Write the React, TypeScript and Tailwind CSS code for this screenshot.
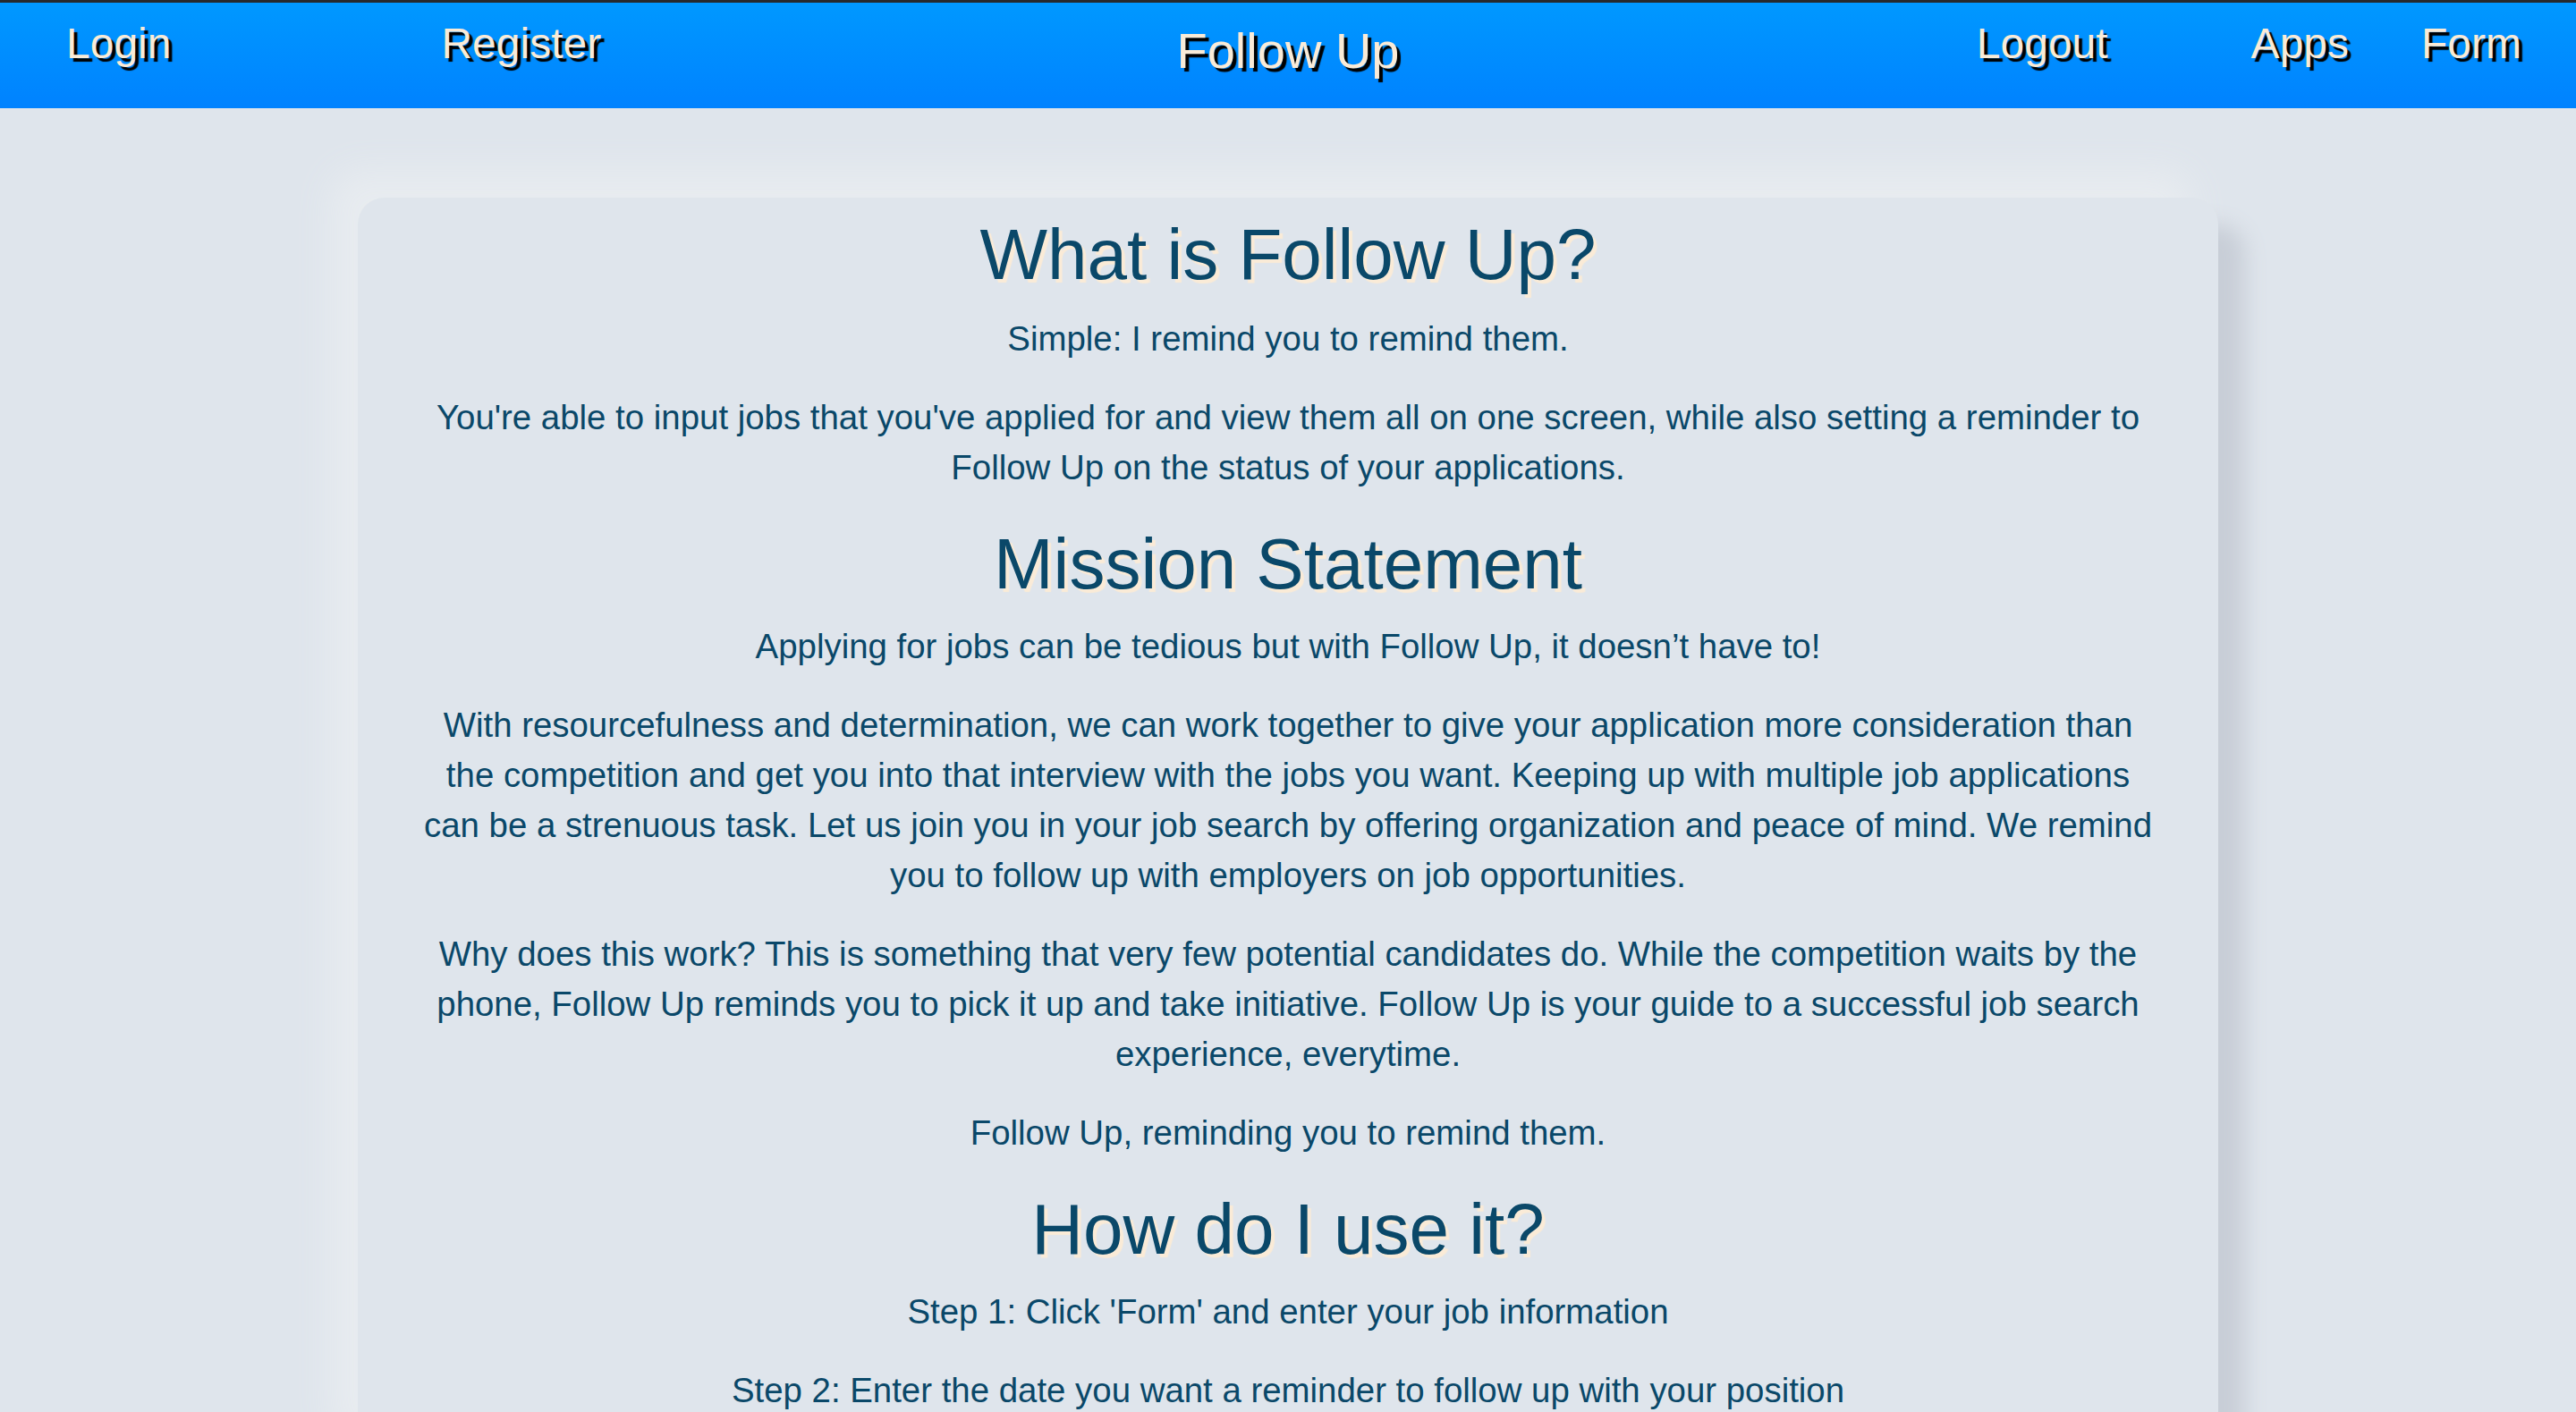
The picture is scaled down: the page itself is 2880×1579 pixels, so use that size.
import React from "react";

const navText =
  "text-[48px] text-[#faebd7] [text-shadow:4px_4px_1px_#000] leading-none";

export default function App() {
  return (
    <div className="min-h-screen bg-[#dfe5ec] font-['Liberation_Sans',Arial,sans-serif]">
      <nav className="h-[121px] border-t-[3px] border-[#26292c] bg-gradient-to-b from-[#0098ff] to-[#0082ff] grid grid-cols-3 items-start">
        <div className="flex pl-[74px] pt-[22px]">
          <span className={navText}>Login</span>
          <span className={navText + " ml-[302px]"}>Register</span>
        </div>
        <div className="flex justify-center pt-[26px]">
          <span className="text-[56px] text-[#faebd7] [text-shadow:4px_4px_1px_#000] leading-none">
            Follow Up
          </span>
        </div>
        <div className="flex justify-end pr-[61px] pt-[22px]">
          <span className={navText}>Logout</span>
          <span className={navText + " ml-[160px]"}>Apps</span>
          <span className={navText + " ml-[81px]"}>Form</span>
        </div>
      </nav>

      <div className="pt-[100px] pb-[80px] flex justify-center">
        <div className="w-[2080px] rounded-[30px] bg-[#dfe5ec] px-[70px] pt-[32px] pb-[60px] text-center text-[#0a4869] shadow-[30px_30px_24px_#c8ced7,-30px_-30px_40px_#e8ecf0]">
          <h1 className="text-[80px] leading-[64px] [text-shadow:4px_4px_1px_#faebd7]">
            What is Follow Up?
          </h1>
          <p className="mt-[34px] text-[38.4px] leading-[56px]">
            Simple: I remind you to remind them.
          </p>
          <p className="mt-[32px] text-[38.4px] leading-[56px]">
            You're able to input jobs that you've applied for and view them all on one screen, while also setting a reminder to Follow Up on the status of your applications.
          </p>
          <h1 className="mt-[48px] text-[80px] leading-[64px] [text-shadow:4px_4px_1px_#faebd7]">
            Mission Statement
          </h1>
          <p className="mt-[32px] text-[38.4px] leading-[56px]">
            Applying for jobs can be tedious but with Follow Up, it doesn’t have to!
          </p>
          <p className="mt-[32px] text-[38.4px] leading-[56px]">
            With resourcefulness and determination, we can work together to give your application more consideration than the competition and get you into that interview with the jobs you want. Keeping up with multiple job applications can be a strenuous task. Let us join you in your job search by offering organization and peace of mind. We remind you to follow up with employers on job opportunities.
          </p>
          <p className="mt-[32px] text-[38.4px] leading-[56px]">
            Why does this work? This is something that very few potential candidates do. While the competition waits by the phone, Follow Up reminds you to pick it up and take initiative. Follow Up is your guide to a successful job search experience, everytime.
          </p>
          <p className="mt-[32px] text-[38.4px] leading-[56px]">
            Follow Up, reminding you to remind them.
          </p>
          <h1 className="mt-[48px] text-[80px] leading-[64px] [text-shadow:4px_4px_1px_#faebd7]">
            How do I use it?
          </h1>
          <p className="mt-[32px] text-[38.4px] leading-[56px]">
            Step 1: Click 'Form' and enter your job information
          </p>
          <p className="mt-[32px] text-[38.4px] leading-[56px]">
            Step 2: Enter the date you want a reminder to follow up with your position
          </p>
        </div>
      </div>
    </div>
  );
}
